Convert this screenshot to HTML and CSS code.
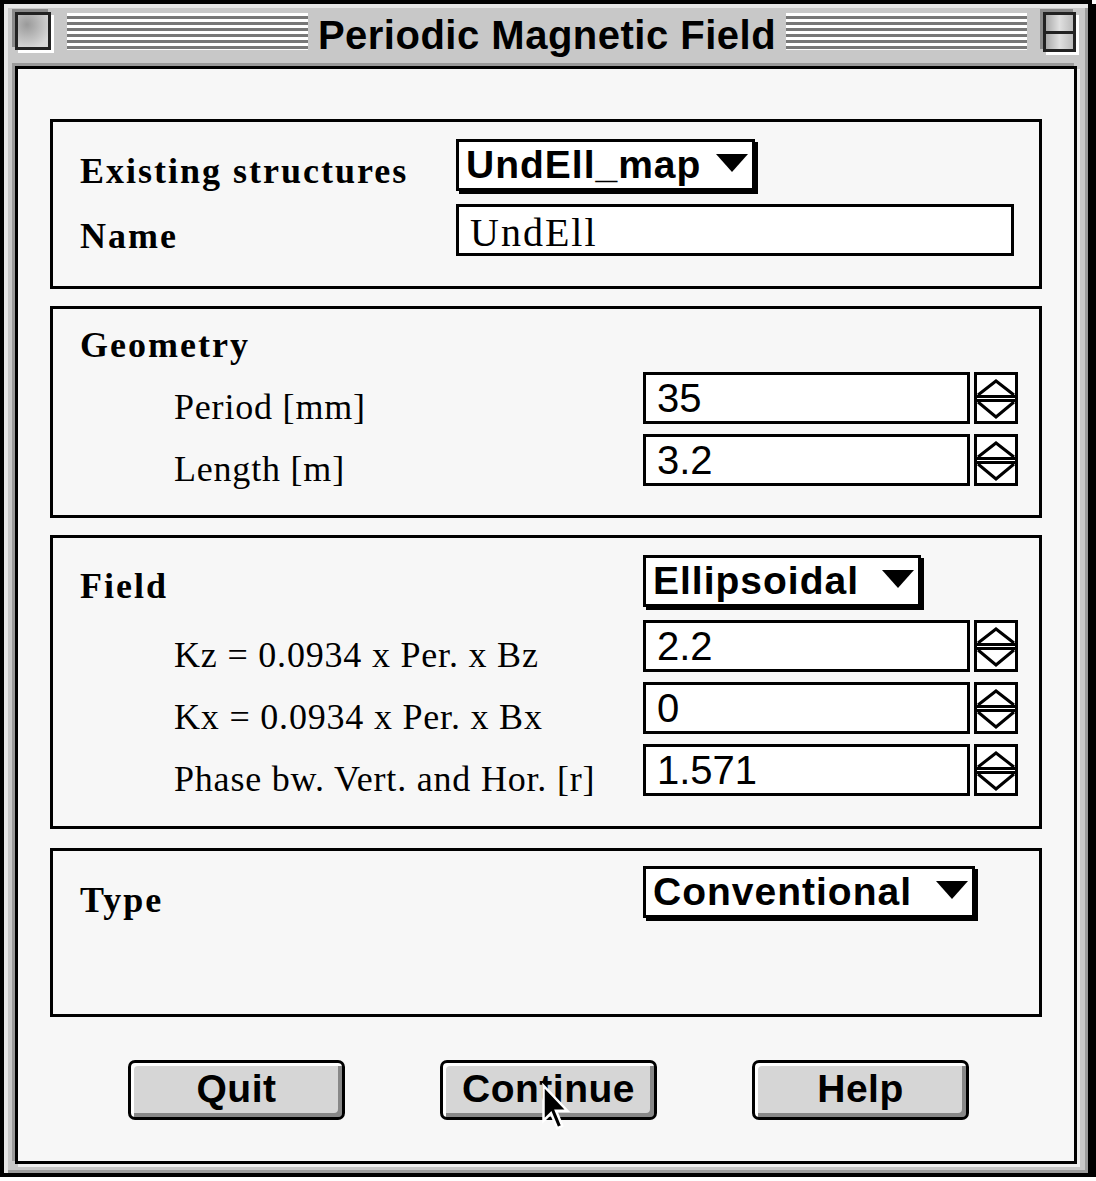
FILE: index.html
```html
<!DOCTYPE html>
<html>
<head lang="en">
    <meta charset="UTF-8">
    <title>Periodic Magnetic Field</title>
    <link rel="stylesheet" href="styles.css">
</head>
<body>
<div class="window">
    <div class="titlebar">
        <div class="closebox"></div>
        <div class="stripes"></div>
        <div class="title">Periodic Magnetic Field</div>
        <div class="stripes"></div>
        <div class="zoombox"><span></span><span></span></div>
    </div>
    <div class="frame">
        <div class="content">
            <div class="box box1">
                <div class="row pop">
                    <div class="label bold">Existing structures</div>
                    <div class="popup pop1">UndEll_map<i class="arrow"></i></div>
                </div>
                <div class="row">
                    <div class="label bold lname">Name</div>
                    <div class="field name">UndEll</div>
                </div>
            </div>

            <div class="box box2">
                <div class="row head">
                    <div class="label bold">Geometry</div>
                </div>
                <div class="row">
                    <div class="label sub">Period [mm]</div>
                    <div class="field num">35</div>
                    <svg class="spin" width="44" height="52" viewBox="0 0 44 52"><rect x="1.5" y="1.5" width="41" height="49" fill="#fff" stroke="#000" stroke-width="3"/><polyline points="4,23 22,9 40,23" fill="none" stroke="#000" stroke-width="3"/><line x1="2" y1="24.5" x2="42" y2="24.5" stroke="#000" stroke-width="3"/><line x1="2" y1="28.5" x2="42" y2="28.5" stroke="#000" stroke-width="3"/><polyline points="4,30 22,45 40,30" fill="none" stroke="#000" stroke-width="3"/></svg>
                </div>
                <div class="row">
                    <div class="label sub">Length [m]</div>
                    <div class="field num">3.2</div>
                    <svg class="spin" width="44" height="52" viewBox="0 0 44 52"><rect x="1.5" y="1.5" width="41" height="49" fill="#fff" stroke="#000" stroke-width="3"/><polyline points="4,23 22,9 40,23" fill="none" stroke="#000" stroke-width="3"/><line x1="2" y1="24.5" x2="42" y2="24.5" stroke="#000" stroke-width="3"/><line x1="2" y1="28.5" x2="42" y2="28.5" stroke="#000" stroke-width="3"/><polyline points="4,30 22,45 40,30" fill="none" stroke="#000" stroke-width="3"/></svg>
                </div>
            </div>

            <div class="box box3">
                <div class="row pop">
                    <div class="label bold lfield">Field</div>
                    <div class="popup pop2">Ellipsoidal<i class="arrow"></i></div>
                </div>
                <div class="row">
                    <div class="label sub">Kz = 0.0934 x Per. x Bz</div>
                    <div class="field num">2.2</div>
                    <svg class="spin" width="44" height="52" viewBox="0 0 44 52"><rect x="1.5" y="1.5" width="41" height="49" fill="#fff" stroke="#000" stroke-width="3"/><polyline points="4,23 22,9 40,23" fill="none" stroke="#000" stroke-width="3"/><line x1="2" y1="24.5" x2="42" y2="24.5" stroke="#000" stroke-width="3"/><line x1="2" y1="28.5" x2="42" y2="28.5" stroke="#000" stroke-width="3"/><polyline points="4,30 22,45 40,30" fill="none" stroke="#000" stroke-width="3"/></svg>
                </div>
                <div class="row">
                    <div class="label sub">Kx = 0.0934 x Per. x Bx</div>
                    <div class="field num">0</div>
                    <svg class="spin" width="44" height="52" viewBox="0 0 44 52"><rect x="1.5" y="1.5" width="41" height="49" fill="#fff" stroke="#000" stroke-width="3"/><polyline points="4,23 22,9 40,23" fill="none" stroke="#000" stroke-width="3"/><line x1="2" y1="24.5" x2="42" y2="24.5" stroke="#000" stroke-width="3"/><line x1="2" y1="28.5" x2="42" y2="28.5" stroke="#000" stroke-width="3"/><polyline points="4,30 22,45 40,30" fill="none" stroke="#000" stroke-width="3"/></svg>
                </div>
                <div class="row">
                    <div class="label sub">Phase bw. Vert. and Hor. [r]</div>
                    <div class="field num">1.571</div>
                    <svg class="spin" width="44" height="52" viewBox="0 0 44 52"><rect x="1.5" y="1.5" width="41" height="49" fill="#fff" stroke="#000" stroke-width="3"/><polyline points="4,23 22,9 40,23" fill="none" stroke="#000" stroke-width="3"/><line x1="2" y1="24.5" x2="42" y2="24.5" stroke="#000" stroke-width="3"/><line x1="2" y1="28.5" x2="42" y2="28.5" stroke="#000" stroke-width="3"/><polyline points="4,30 22,45 40,30" fill="none" stroke="#000" stroke-width="3"/></svg>
                </div>
            </div>

            <div class="box box4">
                <div class="row pop">
                    <div class="label bold ltype">Type</div>
                    <div class="popup pop3">Conventional<i class="arrow"></i></div>
                </div>
            </div>

            <div class="buttons">
                <div class="btn">Quit</div>
                <div class="btn continue">Continue
                    <svg class="cursor" width="30" height="48" viewBox="0 0 12 19"><polygon points="1,1 1,15 4,12 6.5,18 8.5,17 6,11 10.5,11" fill="#000" stroke="#fff" stroke-width="1" stroke-linejoin="miter"/></svg>
                </div>
                <div class="btn">Help</div>
            </div>
        </div>
    </div>
</div>
</body>
</html>
```

FILE: styles.css
```css
body{
    margin: 0;
    background: #fff;
}
.window{
    width: 1084px;
    height: 1169px;
    border: 4px solid #000;
    background: #c8c8c8;
    box-shadow: 4px 4px 0 #000, inset 4px 4px 0 #e6e6e6, inset -3px -3px 0 #9c9c9c;
}

/* title bar */
.titlebar{
    height: 58px;
    box-sizing: border-box;
    display: flex;
    align-items: flex-start;
    padding: 8px 12px 0 11px;
}
.closebox{
    width: 36px;
    height: 38px;
    box-sizing: border-box;
    border: 3px solid #222;
    background: radial-gradient(circle at 30% 30%, #9a9a9a, #d8d8d8 80%);
    box-shadow: -3px -3px 0 #8a8a8a, 3px 3px 0 #fff;
}
.stripes{
    flex: 1;
    height: 37px;
    margin: 1px 0 0 16px;
    background: repeating-linear-gradient(to bottom, #fff 0, #fff 3px, #777 3px, #777 6px);
}
.stripes + .title + .stripes{
    margin: 1px 16px 0 0;
}
.title{
    padding: 0 10px;
    font-family: "Liberation Sans", Arial, sans-serif;
    font-weight: bold;
    font-size: 40px;
    letter-spacing: 0.5px;
    line-height: 46px;
    color: #000;
}
.zoombox{
    width: 33px;
    height: 40px;
    box-sizing: border-box;
    border: 3px solid #222;
    background: #222;
    display: flex;
    flex-direction: column;
    gap: 3px;
    box-shadow: -3px -3px 0 #8a8a8a, 3px 3px 0 #fff;
}
.zoombox span{
    flex: 1;
    background: linear-gradient(to right, #aaa, #e0e0e0 50%, #bbb);
}

/* content area */
.frame{
    padding: 4px 11px 9px 11px;
}
.content{
    height: 1098px;
    box-sizing: border-box;
    border: 3px solid #000;
    background: #f7f7f7;
    padding-top: 50px;
    box-shadow: -3px -3px 0 #999, 3px 3px 0 #eee;
}
.box{
    margin: 0 32px 17px;
    border: 3px solid #000;
    box-sizing: border-box;
    padding: 17px 0 0 27px;
}
.box1{ height: 170px; }
.box2{ height: 212px; }
.box3{ height: 294px; margin-bottom: 19px; }
.box4{ height: 169px; padding-top: 15px; }

.row{
    display: flex;
    align-items: flex-end;
    height: 52px;
    margin-top: 10px;
}
.row:first-child{ margin-top: 0; }
.row.pop{
    height: 55px;
    align-items: flex-start;
    margin-bottom: 2px;
}
.row.head{ height: 36px; }

.label{
    width: 563px;
    flex: none;
    line-height: 36px;
    font-family: "Liberation Serif", "Times New Roman", serif;
    font-size: 36px;
    color: #000;
    margin-bottom: -1px;
}
.box1 .label{ width: 376px; }
.label.bold{
    font-weight: bold;
    letter-spacing: 2px;
}
.label.sub{
    padding-left: 94px;
    width: 469px;
    letter-spacing: 0.8px;
}
.pop .label{ align-self: flex-end; margin-bottom: 5px; }
.pop .lfield{ margin-bottom: 6px; }
.pop .ltype{ margin-bottom: 3px; }
.lname{ margin-bottom: 2px; }

/* popup menus */
.popup{
    height: 52px;
    box-sizing: border-box;
    border: 3px solid #000;
    background: #fff;
    box-shadow: 3px 3px 0 #000;
    display: flex;
    align-items: center;
    padding: 0 4px 0 7px;
    font-family: "Liberation Sans", Arial, sans-serif;
    font-weight: bold;
    font-size: 39px;
    letter-spacing: 1px;
}
.pop1{ width: 299px; }
.pop2{ width: 278px; }
.pop3{ width: 332px; }
.arrow{
    margin-left: auto;
    margin-bottom: 5px;
    width: 0;
    height: 0;
    border-left: 16px solid transparent;
    border-right: 16px solid transparent;
    border-top: 18px solid #000;
}

/* text fields */
.field{
    height: 52px;
    box-sizing: border-box;
    border: 3px solid #000;
    background: #fff;
    padding: 0 11px;
    line-height: 46px;
    font-family: "Liberation Sans", Arial, sans-serif;
    font-size: 40px;
    color: #000;
}
.field.num{ width: 327px; }
.field.name{
    width: 558px;
    font-family: "Liberation Serif", "Times New Roman", serif;
    letter-spacing: 2px;
    padding-top: 3px;
}
.spin{
    margin-left: 4px;
    flex: none;
}

/* buttons */
.buttons{
    display: flex;
    gap: 95px;
    margin-top: 43px;
    padding-left: 110px;
}
.btn{
    position: relative;
    width: 217px;
    height: 60px;
    box-sizing: border-box;
    border: 3px solid #000;
    border-radius: 7px;
    background: #d6d6d6;
    box-shadow: inset 3px 3px 0 #fff, inset -4px -4px 0 #888;
    text-align: center;
    line-height: 52px;
    font-family: "Liberation Sans", Arial, sans-serif;
    font-weight: bold;
    font-size: 39px;
    letter-spacing: 0.5px;
    color: #000;
}
.cursor{
    position: absolute;
    left: 98px;
    top: 20px;
}
```
